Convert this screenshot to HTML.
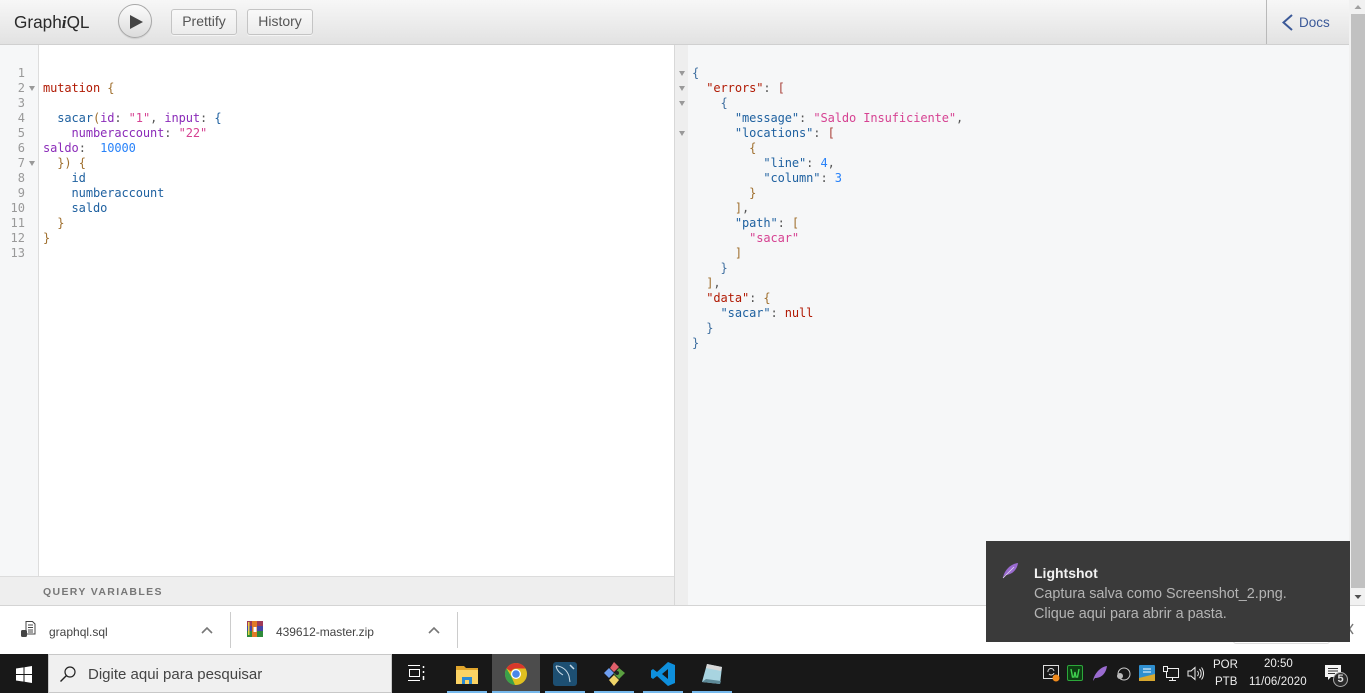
<!DOCTYPE html>
<html lang="pt"><head><meta charset="utf-8"><title>GraphiQL</title>
<style>
html,body{margin:0;padding:0;width:1365px;height:693px;overflow:hidden;background:#fff;font-family:"Liberation Sans",sans-serif}
.a{position:absolute;white-space:pre}
#top{left:0;top:0;width:1349px;height:44px;background:linear-gradient(#f7f7f7,#e2e2e2);border-bottom:1px solid #d0d0d0}
.btn{top:9px;height:26px;box-sizing:border-box;background:linear-gradient(#f9f9f9,#ececec);border:1px solid #c4c4c4;border-radius:3px;box-shadow:0 1px 0 rgba(255,255,255,.6);color:#555;font-size:14px;line-height:23px;text-align:center}
.m{font-family:"DejaVu Sans Mono",monospace;font-size:12px;letter-spacing:-.09px;line-height:15px;height:15px;color:#141823}
.n{font-family:"DejaVu Sans Mono",monospace;font-size:12px;line-height:15px;color:#999;width:25px;text-align:right;left:0}
.k{color:#b11a04}.p{color:#555}.b{color:#1f61a0}.v{color:#397d13}.at{color:#8b2bb9}.s{color:#d64292}.nu{color:#2882f9}.g{color:#a0702f}.q{color:#1f61a0}.r{color:#a8413a}.nl{color:#b11a04}.d{color:#3f6fa0}
.tri{width:0;height:0;border-left:3px solid transparent;border-right:3px solid transparent;border-top:5px solid #999}
.t{font-size:11.500px;color:#eee}
</style></head><body>

<div class="a" id="top"></div>
<div class="a" style="left:14px;top:11px;font-size:17.200px;line-height:22px;color:#2a2a2a">Graph<span style="font-style:italic;font-weight:bold;font-family:'Liberation Serif',serif">i</span>QL</div>
<div class="a" style="left:118px;top:4px;width:32px;height:32px;border-radius:50%;border:1px solid #a8a8a8;background:linear-gradient(#fbfbfb,#dcdcdc);box-shadow:0 1px 1px rgba(0,0,0,.1)"></div>
<svg class="a" style="left:130px;top:15px" width="14" height="14"><path d="M0 0L13 7L0 14Z" fill="#444"/></svg>
<div class="a btn" style="left:171px;width:66px">Prettify</div>
<div class="a btn" style="left:247px;width:66px">History</div>
<div class="a" style="left:1266px;top:0;width:1px;height:44px;background:#b9b9b9"></div>
<svg class="a" style="left:1281px;top:13px" width="14" height="19"><path d="M11 2L2.500 9.500L11 17" fill="none" stroke="#3b5998" stroke-width="2"/></svg>
<div class="a" style="left:1299px;top:14px;font-size:13.500px;line-height:17px;color:#3b5998">Docs</div>

<!-- right result -->
<div class="a" style="left:675px;top:45px;width:674px;height:560px;background:#f6f7f8"></div>
<div class="a" style="left:675px;top:45px;width:13px;height:560px;background:#eeeeee"></div>

<!-- scrollbar -->
<div class="a" style="left:1349px;top:0;width:16px;height:605px;background:#f1f1f1"></div>
<div class="a" style="left:1351px;top:14px;width:14px;height:574px;background:#c1c1c1"></div>
<svg class="a" style="left:1351px;top:0" width="14" height="14"><path d="M3.500 9L7 5L10.500 9Z" fill="#a0a0a0"/></svg>
<svg class="a" style="left:1351px;top:590px" width="14" height="14"><path d="M3.500 5L7 9L10.500 5Z" fill="#505050"/></svg>

<!-- left editor -->
<div class="a" style="left:0;top:45px;width:38px;height:531px;background:#f6f7f8;border-right:1px solid #ddd"></div>
<div class="a" style="left:39px;top:45px;width:635px;height:531px;background:#fff"></div>
<div class="a" style="left:674px;top:45px;width:1px;height:560px;background:#d8d8d8"></div>
<div class="a" style="left:0;top:576px;width:674px;height:29px;background:#eeeeee;border-top:1px solid #dcdcdc;box-sizing:border-box"></div>
<div class="a" style="left:43px;top:585px;font-size:10.500px;line-height:14px;font-weight:bold;color:#777;letter-spacing:1.35px">QUERY VARIABLES</div>

<div class="a n" style="top:66px">1</div><div class="a n" style="top:81px">2</div><div class="a n" style="top:96px">3</div><div class="a n" style="top:111px">4</div><div class="a n" style="top:126px">5</div><div class="a n" style="top:141px">6</div><div class="a n" style="top:156px">7</div><div class="a n" style="top:171px">8</div><div class="a n" style="top:186px">9</div><div class="a n" style="top:201px">10</div><div class="a n" style="top:216px">11</div><div class="a n" style="top:231px">12</div><div class="a n" style="top:246px">13</div>
<div class="a tri" style="left:29px;top:86px"></div>
<div class="a tri" style="left:29px;top:161px"></div>

<div class="a m" style="left:43px;top:81px"><span class="k">mutation</span> <span class="g">{</span></div>
<div class="a m" style="left:43px;top:111px">  <span class="b">sacar</span><span class="g">(</span><span class="at">id</span><span class="p">:</span> <span class="s">"1"</span><span class="p">,</span> <span class="at">input</span><span class="p">:</span> <span class="b">{</span></div>
<div class="a m" style="left:43px;top:126px">    <span class="at">numberaccount</span><span class="p">:</span> <span class="s">"22"</span></div>
<div class="a m" style="left:43px;top:141px"><span class="at">saldo</span><span class="p">:</span>  <span class="nu">10000</span></div>
<div class="a m" style="left:43px;top:156px">  <span class="g">})</span> <span class="g">{</span></div>
<div class="a m" style="left:43px;top:171px">    <span class="b">id</span></div>
<div class="a m" style="left:43px;top:186px">    <span class="b">numberaccount</span></div>
<div class="a m" style="left:43px;top:201px">    <span class="b">saldo</span></div>
<div class="a m" style="left:43px;top:216px">  <span class="g">}</span></div>
<div class="a m" style="left:43px;top:231px"><span class="g">}</span></div>

<div class="a tri" style="left:679px;top:71px"></div>
<div class="a tri" style="left:679px;top:86px"></div>
<div class="a tri" style="left:679px;top:101px"></div>
<div class="a tri" style="left:679px;top:131px"></div>

<div class="a m" style="left:692px;top:66px"><span class="d">{</span></div>
<div class="a m" style="left:692px;top:81px">  <span class="nl">"errors"</span><span class="p">:</span> <span class="r">[</span></div>
<div class="a m" style="left:692px;top:96px">    <span class="d">{</span></div>
<div class="a m" style="left:692px;top:111px">      <span class="q">"message"</span><span class="p">:</span> <span class="s">"Saldo Insuficiente"</span><span class="p">,</span></div>
<div class="a m" style="left:692px;top:126px">      <span class="q">"locations"</span><span class="p">:</span> <span class="r">[</span></div>
<div class="a m" style="left:692px;top:141px">        <span class="g">{</span></div>
<div class="a m" style="left:692px;top:156px">          <span class="q">"line"</span><span class="p">:</span> <span class="nu">4</span><span class="p">,</span></div>
<div class="a m" style="left:692px;top:171px">          <span class="q">"column"</span><span class="p">:</span> <span class="nu">3</span></div>
<div class="a m" style="left:692px;top:186px">        <span class="g">}</span></div>
<div class="a m" style="left:692px;top:201px">      <span class="g">]</span><span class="p">,</span></div>
<div class="a m" style="left:692px;top:216px">      <span class="q">"path"</span><span class="p">:</span> <span class="g">[</span></div>
<div class="a m" style="left:692px;top:231px">        <span class="s">"sacar"</span></div>
<div class="a m" style="left:692px;top:246px">      <span class="g">]</span></div>
<div class="a m" style="left:692px;top:261px">    <span class="d">}</span></div>
<div class="a m" style="left:692px;top:276px">  <span class="g">]</span><span class="p">,</span></div>
<div class="a m" style="left:692px;top:291px">  <span class="nl">"data"</span><span class="p">:</span> <span class="g">{</span></div>
<div class="a m" style="left:692px;top:306px">    <span class="q">"sacar"</span><span class="p">:</span> <span class="k">null</span></div>
<div class="a m" style="left:692px;top:321px">  <span class="d">}</span></div>
<div class="a m" style="left:692px;top:336px"><span class="d">}</span></div>

<!-- download bar -->
<div class="a" style="left:0;top:605px;width:1365px;height:49px;background:#fff;border-top:1px solid #d4d4d4;box-sizing:border-box"></div>
<svg class="a" style="left:20px;top:621px" width="16" height="16"><path d="M6 .5H12.500L15 3V13H6Z" fill="#fff" stroke="#444"/><path d="M8 4H13M8 6.500H13M8 9H13M8 11H13" stroke="#444"/><rect x="1" y="9" width="6" height="7" rx="1.500" fill="#444"/></svg>
<div class="a" style="left:49px;top:624px;font-size:12px;line-height:16px;color:#444">graphql.sql</div>
<svg class="a" style="left:201px;top:626px" width="12" height="8"><path d="M1 7L6 2L11 7" fill="none" stroke="#777" stroke-width="1.600"/></svg>
<div class="a" style="left:230px;top:612px;width:1px;height:36px;background:#ccc"></div>
<svg class="a" style="left:247px;top:621px" width="16" height="16"><rect width="16" height="5" fill="#a03a58"/><rect y="5" width="16" height="5" fill="#4646a8"/><rect y="10" width="16" height="6" fill="#2e8b3a"/><rect x="5" width="5" height="16" fill="#e07a28"/><rect x="6.500" y="6" width="3" height="5" fill="#fff"/><rect x="1" y="1" width="1.500" height="13" fill="#e8d24a"/></svg>
<div class="a" style="left:276px;top:624px;font-size:12px;letter-spacing:-.05px;line-height:16px;color:#444">439612-master.zip</div>
<svg class="a" style="left:428px;top:626px" width="12" height="8"><path d="M1 7L6 2L11 7" fill="none" stroke="#777" stroke-width="1.600"/></svg>
<div class="a" style="left:457px;top:612px;width:1px;height:36px;background:#ccc"></div>
<div class="a" style="left:1233px;top:630px;width:97px;height:14px;border:1px solid #ddd;border-radius:3px;box-sizing:border-box"></div>
<svg class="a" style="left:1345px;top:623px" width="10" height="12"><path d="M1 1L8 11M8 1L1 11" stroke="#777" stroke-width="1.500"/></svg>

<!-- toast -->
<div class="a" style="left:986px;top:541px;width:364px;height:101px;background:#3a3a3a"></div>
<svg class="a" style="left:1002px;top:562px" width="17" height="17"><path d="M1 16C2 9 8 2 16 1C15 8 10 13 3 13Z" fill="#9a6bd0"/><path d="M1 16L12 5" stroke="#e6d9f5" stroke-width=".8"/></svg>
<div class="a" style="left:1034px;top:564px;font-size:14px;line-height:18px;font-weight:bold;color:#f2f2f2">Lightshot</div>
<div class="a" style="left:1034px;top:584px;font-size:14.400px;line-height:20px;color:#b4b4b4">Captura salva como Screenshot_2.png.</div>
<div class="a" style="left:1034px;top:604px;font-size:14.400px;line-height:20px;color:#b4b4b4">Clique aqui para abrir a pasta.</div>

<!-- taskbar -->
<div class="a" style="left:0;top:654px;width:1365px;height:39px;background:#181818"></div>
<svg class="a" style="left:16px;top:666px" width="17" height="17"><path d="M0 2.500L7.500 1.400V8H0ZM8.500 1.300L16 0V8H8.500ZM0 9H7.500V15.600L0 14.500ZM8.500 9H16V17L8.500 15.700Z" fill="#fff"/></svg>
<div class="a" style="left:48px;top:654px;width:344px;height:39px;background:#f0f0f0;border:1px solid #c8c8c8;box-sizing:border-box"></div>
<svg class="a" style="left:59px;top:665px" width="18" height="18"><circle cx="11" cy="7" r="5" fill="none" stroke="#222" stroke-width="1.200"/><path d="M7.500 10.500L1.500 16.500" stroke="#222" stroke-width="1.400"/></svg>
<div class="a" style="left:88px;top:665px;font-size:15px;line-height:19px;color:#444">Digite aqui para pesquisar</div>

<svg class="a" style="left:408px;top:665px" width="18" height="17" fill="none" stroke="#fff"><path d="M0 .5H12M0 15.500H12"/><rect x="1.500" y="4.500" width="10" height="7"/><path d="M15.500 1V3M15.500 6V8M15.500 11V15" stroke-width="1.500"/></svg>

<div class="a" style="left:492px;top:654px;width:48px;height:39px;background:#4c4c4c"></div>
<div class="a" style="left:447px;top:691px;width:40px;height:2px;background:#76b9ed"></div>
<div class="a" style="left:492px;top:691px;width:48px;height:2px;background:#76b9ed"></div>
<div class="a" style="left:545px;top:691px;width:40px;height:2px;background:#76b9ed"></div>
<div class="a" style="left:594px;top:691px;width:40px;height:2px;background:#76b9ed"></div>
<div class="a" style="left:643px;top:691px;width:40px;height:2px;background:#76b9ed"></div>
<div class="a" style="left:692px;top:691px;width:40px;height:2px;background:#76b9ed"></div>

<svg class="a" style="left:456px;top:665px" width="22" height="19"><path d="M0 1H8L10 3H22V8H0Z" fill="#e0a52c"/><rect y="5" width="22" height="14" fill="#fbd364"/><path d="M6 19V12H16V19H13V15H9V19Z" fill="#2a8ad4"/></svg>
<svg class="a" style="left:505px;top:663px" width="22" height="22" viewBox="0 0 22 22"><circle cx="11" cy="11" r="11" fill="#e0c020"/><path d="M11 0A11 11 0 0 1 20.500 5.500H11A5.500 5.500 0 0 0 6 8.500L1.500 5.500A11 11 0 0 1 11 0Z" fill="#d8382c"/><path d="M1.500 5.500L6.500 14L10 22A11 11 0 0 1 1.500 5.500Z" fill="#3aa04a"/><circle cx="11" cy="11" r="5" fill="#fff"/><circle cx="11" cy="11" r="3.800" fill="#4a86e8"/></svg>
<svg class="a" style="left:553px;top:662px" width="24" height="24"><rect width="24" height="24" rx="3" fill="#1d4f72"/><path d="M3 4C9 4 14 8 16 14L17 20M3 4C4 9 7 11 10 13" fill="none" stroke="#c9dbe7" stroke-width="1"/><path d="M17 3L21 7" stroke="#c9dbe7" stroke-width="1.500"/></svg>
<svg class="a" style="left:602px;top:662px" width="24" height="24"><path d="M7 6L12 11L7 16L2 11Z" fill="#6e9ef0"/><path d="M12 0L17 5L12 10L8 6Z" fill="#e0606a"/><path d="M17 6L23 11L17 17L12 12Z" fill="#5aa040"/><path d="M12 13L17 18L12 24L7 18Z" fill="#f0d468"/><circle cx="15" cy="11" r="2" fill="#222"/></svg>
<svg class="a" style="left:651px;top:662px" width="24" height="24"><path d="M17 0L24 3V21L17 24L6 14L2 17L0 15.500V8.500L2 7L6 10ZM17 7L11 12L17 17Z" fill="#0e8fdc"/></svg>
<svg class="a" style="left:700px;top:662px" width="24" height="24"><path d="M7 2L22 5L20 22L2 20Z" fill="#a8d4e0"/><path d="M7 2L22 5L21 9L6 6Z" fill="#d8d8d8"/><path d="M2 20L20 22L21 19L6 17Z" fill="#5e8a98"/></svg>

<svg class="a" style="left:1043px;top:665px" width="17" height="17"><rect x=".5" y=".5" width="15" height="13" fill="none" stroke="#ddd"/><path d="M5 7A3 3 0 0 1 11 6M11 8A3 3 0 0 1 6 9" fill="none" stroke="#ddd"/><circle cx="13" cy="13" r="3.500" fill="#f08a1c"/></svg>
<svg class="a" style="left:1067px;top:665px" width="17" height="17"><rect x=".5" y=".5" width="15" height="15" rx="1.500" fill="#0d3d12" stroke="#2ca83a"/><path d="M4 4L5.500 12H7L8 7L9 12H10.500L12 4" fill="none" stroke="#3fd04f" stroke-width="1.400"/></svg>
<svg class="a" style="left:1092px;top:665px" width="16" height="17"><path d="M1 16C2 9 8 2 15 1C14 8 10 13 3 13Z" fill="#9a6bd0"/></svg>
<svg class="a" style="left:1115px;top:665px" width="17" height="17" fill="none" stroke="#ccc"><circle cx="9" cy="9" r="6"/><circle cx="5" cy="11" r="3" fill="#bbb" stroke="none"/></svg>
<svg class="a" style="left:1139px;top:665px" width="17" height="17"><rect width="16" height="16" rx="1" fill="#2f8fd0"/><path d="M0 13L16 9V16H0Z" fill="#d8a830"/><path d="M4 4H12M4 7H12" stroke="#fff"/></svg>
<svg class="a" style="left:1163px;top:666px" width="17" height="16" fill="none" stroke="#eee"><rect x="3.500" y="2.500" width="12" height="9"/><path d="M9.500 12V14M6 14.500H13"/><rect x=".5" y=".5" width="4" height="5" fill="#181818"/></svg>
<svg class="a" style="left:1187px;top:666px" width="17" height="15" fill="none" stroke="#eee"><path d="M1 5H4L8 1.500V13.500L4 10H1Z"/><path d="M10.500 5A4 4 0 0 1 10.500 10M12.500 3A7 7 0 0 1 12.500 12M14.500 1.500A10 10 0 0 1 14.500 13.500"/></svg>
<div class="a t" style="left:1213px;top:658px;line-height:15px">POR</div>
<div class="a t" style="left:1215px;top:675px;line-height:15px">PTB</div>
<div class="a t" style="left:1264px;top:657px;line-height:15px">20:50</div>
<div class="a t" style="left:1249px;top:675px;line-height:15px;letter-spacing:.1px">11/06/2020</div>
<svg class="a" style="left:1325px;top:665px" width="17" height="16"><path d="M0 0H16V12H6L3 15V12H0Z" fill="#f5f5f5"/><path d="M3 3.500H13M3 6H13M3 8.500H10" stroke="#333"/></svg>
<div class="a" style="left:1333px;top:672px;width:15px;height:15px;border-radius:50%;border:1px solid #aaa;background:#2a2a2a;box-sizing:border-box;text-align:center;font-size:11px;font-weight:bold;line-height:13px;color:#ddd">5</div>

</body></html>
